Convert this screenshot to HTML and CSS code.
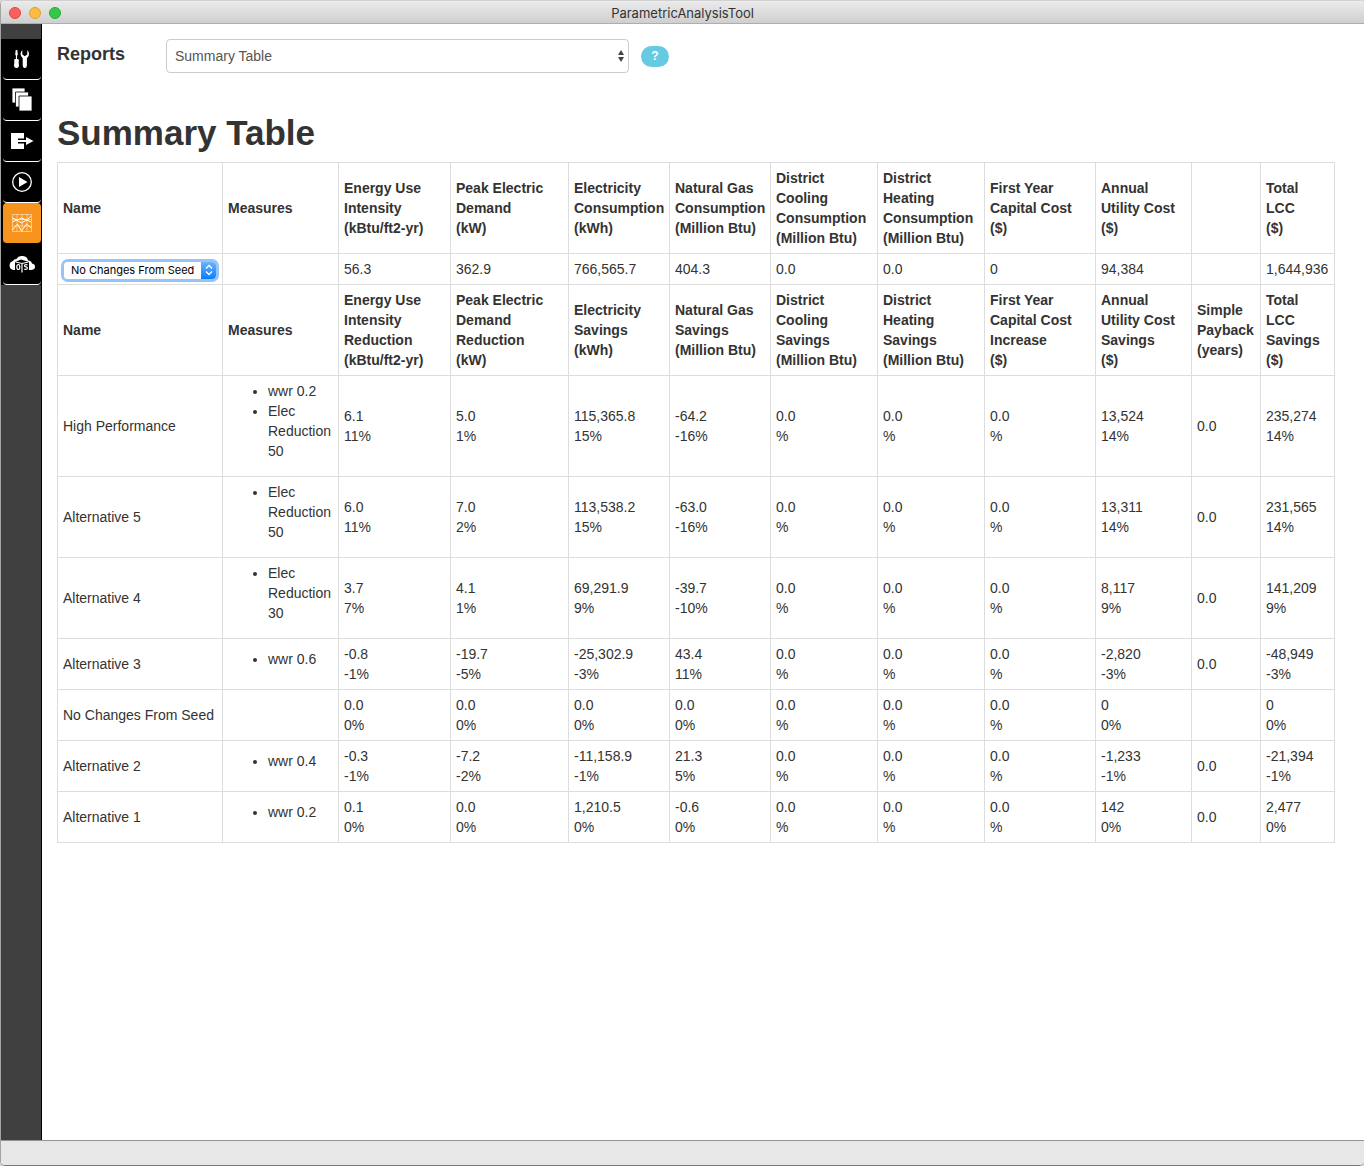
FILE: index.html
```html
<!DOCTYPE html>
<html lang="en">
<head>
<meta charset="utf-8">
<title>ParametricAnalysisTool</title>
<link rel="stylesheet" href="styles.css">
</head>
<body>
<div class="window">
  <header class="titlebar">
    <div class="lights">
      <button class="light light-close" type="button" aria-label="Close"></button>
      <button class="light light-min" type="button" aria-label="Minimize"></button>
      <button class="light light-zoom" type="button" aria-label="Zoom"></button>
    </div>
    <span class="window-title">ParametricAnalysisTool</span>
  </header>
  <div class="workspace">
    <nav class="sidebar" aria-label="Sections">
      <div class="nav-list">
      <button class="nav-item" type="button" aria-label="Measures">
        <svg width="28" height="28" viewBox="0 0 28 28" fill="#fff"><path d="M7.700 5h1.600l.5 4.500-.7 1.200v3.300h1q1.200.8.700 2.200-.4 1.400.1 3 .6 3.800-2.400 3.800t-2.400-3.800q.5-1.600.1-3-.5-1.400.7-2.200h1v-3.300l-.7-1.200z"/><path d="M14.300 5q-3.800 4.300.4 8.200v7.300q.2 2.500 2.100 2.500t2.100-2.500v-7.300q4.200-3.900.4-8.200v4.500l-2.500 1.800-2.500-1.800z"/></svg>
      </button>
      <button class="nav-item" type="button" aria-label="Design alternatives">
        <svg width="28" height="28" viewBox="0 0 28 28" fill="#fff" stroke="#000" stroke-width=".8"><path d="M4 2h13v15h-13z"/><path d="M7.500 6h13v15h-13z"/><path d="M11 10h13v15h-13z"/></svg>
      </button>
      <button class="nav-item" type="button" aria-label="Output">
        <svg width="28" height="28" viewBox="0 0 28 28"><path fill="#fff" d="M3 6h13v16h-13z"/><path d="M10 11.500h9v5h-9z"/><path fill="#fff" d="M10 13h8v-3l7.500 4-7.500 4v-3h-8z"/></svg>
      </button>
      <button class="nav-item" type="button" aria-label="Run">
        <svg width="28" height="28" viewBox="0 0 28 28"><circle cx="14" cy="14" r="9.300" fill="none" stroke="#fff" stroke-width="1.300"/><path fill="#fff" d="M11 9l8.500 5-8.500 5z"/></svg>
      </button>
      <button class="nav-item nav-active" type="button" aria-label="Reports">
        <svg width="28" height="28" viewBox="0 0 28 28" fill="none" stroke="#fff"><path opacity=".6" stroke-width=".8" d="M4.500 5.500h19v17h-19zM4.500 10.500h19M4.500 17h19M9 5.500v17M14 5.500v17M19 5.500v17"/><path d="M4.500 9l5 2 4-2 5 2 5-4M4.500 13l4-2 5 3 5-3 5 2M4.500 21l5-6 4 7 5-7 5 4"/></svg>
      </button>
      <button class="nav-item" type="button" aria-label="OpenStudio Server">
        <svg width="28" height="28" viewBox="0 0 28 28"><path fill="#fff" d="M5.500 20a4.600 4.600 0 0 1-.5-9q.5-2 3.500-2a6 5 0 0 1 11.500 1.500 4 4 0 0 1 4 3q3 .5 3 3.200t-3.500 3.300z"/><path d="M7 12l6-2.500 8 2.500v8.500l-7 3-7-3z"/><g fill="none" stroke="#fff" stroke-width="1.200"><path d="M7.500 12l6.500 1.500 6.500-1.500M14 13.500v9"/><ellipse cx="10.300" cy="17" rx="1.500" ry="2.500"/><path d="M19.500 14.800q-3-.5-3 1 0 .9 1.500 1.100t1.300 1.400q-.3 1.500-3 .9"/></g></svg>
      </button>
      </div>
    </nav>
    <main class="content">
      <div class="report-picker">
        <label class="picker-label" for="report">Reports</label>
        <span class="picker-field">
          <select class="picker-select" id="report"><option>Summary Table</option></select>
          <svg class="picker-arrows" width="6" height="12" viewBox="0 0 6 12" fill="#444"><path d="M3 0l3 5h-6zM3 12l3-5h-6z"/></svg>
        </span>
        <button class="help" type="button" aria-label="Help">?</button>
      </div>
      <h1 class="report-title">Summary Table</h1>
      <table class="summary">
        <colgroup>
          <col class="c-name"><col class="c-measures"><col class="c-eui"><col class="c-peak"><col class="c-energy"><col class="c-energy"><col class="c-district"><col class="c-district"><col class="c-capital"><col class="c-utility"><col class="c-payback"><col class="c-lcc">
        </colgroup>
        <tbody>
          <tr><th>Name</th><th>Measures</th><th>Energy Use<br>Intensity<br>(kBtu/ft2-yr)</th><th>Peak Electric<br>Demand<br>(kW)</th><th>Electricity<br>Consumption<br>(kWh)</th><th>Natural Gas<br>Consumption<br>(Million Btu)</th><th>District<br>Cooling<br>Consumption<br>(Million Btu)</th><th>District<br>Heating<br>Consumption<br>(Million Btu)</th><th>First Year<br>Capital Cost<br>($)</th><th>Annual<br>Utility Cost<br>($)</th><td></td><th>Total<br>LCC<br>($)</th></tr>
          <tr><td><span class="baseline-field"><select class="baseline" aria-label="Baseline alternative"><option>No Changes From Seed</option></select><span class="baseline-cap"><svg width="8" height="12" viewBox="0 0 8 12" fill="none" stroke="#fff" stroke-width="1.300"><path d="M1 4.500l3-3 3 3M1 7.500l3 3 3-3"/></svg></span></span></td><td></td><td>56.3</td><td>362.9</td><td>766,565.7</td><td>404.3</td><td>0.0</td><td>0.0</td><td>0</td><td>94,384</td><td></td><td>1,644,936</td></tr>
          <tr><th>Name</th><th>Measures</th><th>Energy Use<br>Intensity<br>Reduction<br>(kBtu/ft2-yr)</th><th>Peak Electric<br>Demand<br>Reduction<br>(kW)</th><th>Electricity<br>Savings<br>(kWh)</th><th>Natural Gas<br>Savings<br>(Million Btu)</th><th>District<br>Cooling<br>Savings<br>(Million Btu)</th><th>District<br>Heating<br>Savings<br>(Million Btu)</th><th>First Year<br>Capital Cost<br>Increase<br>($)</th><th>Annual<br>Utility Cost<br>Savings<br>($)</th><th>Simple<br>Payback<br>(years)</th><th>Total<br>LCC<br>Savings<br>($)</th></tr>
          <tr><td>High Performance</td><td><ul class="measures"><li>wwr 0.2</li><li>Elec Reduction 50</li></ul></td><td>6.1<br>11%</td><td>5.0<br>1%</td><td>115,365.8<br>15%</td><td>-64.2<br>-16%</td><td>0.0<br>%</td><td>0.0<br>%</td><td>0.0<br>%</td><td>13,524<br>14%</td><td>0.0</td><td>235,274<br>14%</td></tr>
          <tr><td>Alternative 5</td><td><ul class="measures"><li>Elec Reduction 50</li></ul></td><td>6.0<br>11%</td><td>7.0<br>2%</td><td>113,538.2<br>15%</td><td>-63.0<br>-16%</td><td>0.0<br>%</td><td>0.0<br>%</td><td>0.0<br>%</td><td>13,311<br>14%</td><td>0.0</td><td>231,565<br>14%</td></tr>
          <tr><td>Alternative 4</td><td><ul class="measures"><li>Elec Reduction 30</li></ul></td><td>3.7<br>7%</td><td>4.1<br>1%</td><td>69,291.9<br>9%</td><td>-39.7<br>-10%</td><td>0.0<br>%</td><td>0.0<br>%</td><td>0.0<br>%</td><td>8,117<br>9%</td><td>0.0</td><td>141,209<br>9%</td></tr>
          <tr><td>Alternative 3</td><td><ul class="measures"><li>wwr 0.6</li></ul></td><td>-0.8<br>-1%</td><td>-19.7<br>-5%</td><td>-25,302.9<br>-3%</td><td>43.4<br>11%</td><td>0.0<br>%</td><td>0.0<br>%</td><td>0.0<br>%</td><td>-2,820<br>-3%</td><td>0.0</td><td>-48,949<br>-3%</td></tr>
          <tr><td>No Changes From Seed</td><td></td><td>0.0<br>0%</td><td>0.0<br>0%</td><td>0.0<br>0%</td><td>0.0<br>0%</td><td>0.0<br>%</td><td>0.0<br>%</td><td>0.0<br>%</td><td>0<br>0%</td><td></td><td>0<br>0%</td></tr>
          <tr><td>Alternative 2</td><td><ul class="measures"><li>wwr 0.4</li></ul></td><td>-0.3<br>-1%</td><td>-7.2<br>-2%</td><td>-11,158.9<br>-1%</td><td>21.3<br>5%</td><td>0.0<br>%</td><td>0.0<br>%</td><td>0.0<br>%</td><td>-1,233<br>-1%</td><td>0.0</td><td>-21,394<br>-1%</td></tr>
          <tr><td>Alternative 1</td><td><ul class="measures"><li>wwr 0.2</li></ul></td><td>0.1<br>0%</td><td>0.0<br>0%</td><td>1,210.5<br>0%</td><td>-0.6<br>0%</td><td>0.0<br>%</td><td>0.0<br>%</td><td>0.0<br>%</td><td>142<br>0%</td><td>0.0</td><td>2,477<br>0%</td></tr>
        </tbody>
      </table>
    </main>
  </div>
  <footer class="statusbar"></footer>
</div>
</body>
</html>
```
FILE: styles.css
```css
* { box-sizing: border-box; }

body {
  margin: 0;
  background: #d8d8d8;
  color: #333;
  font: 14px/20px "Liberation Sans", Arial, sans-serif;
}

button { padding: 0; border: 0; font-family: inherit; }

.window {
  display: flex;
  flex-direction: column;
  min-height: 100vh;
  border-left: 1px solid #a3a3a3;
  border-bottom: 1px solid #777;
  border-radius: 5px;
  background: #fff;
  overflow: hidden;
}

.titlebar {
  display: grid;
  grid-template-columns: 1fr auto 1fr;
  align-items: center;
  height: 24px;
  padding: 2px 8px 0;
  border-top: 1px solid #d0d0d0;
  border-bottom: 1px solid #aeaeae;
  background: linear-gradient(#ebebeb, #cfcfcf);
}

.lights { display: flex; gap: 8px; }
.light { width: 12px; height: 12px; border: 1px solid; border-radius: 50%; }
.light-close { background: #fc605c; border-color: #df4744; }
.light-min { background: #fdbc40; border-color: #de9f34; }
.light-zoom { background: #34c84a; border-color: #27aa35; }

.window-title {
  color: #333;
  font: 13px/16px Inter, "Liberation Sans", sans-serif;
}

.workspace { display: flex; flex: 1; }

.sidebar {
  flex: none;
  width: 41px;
  padding-top: 15px;
  border-right: 1px solid #000;
  background: #404040;
}

.nav-list { padding-left: 2px; background: #000; }

.nav-item {
  display: flex;
  align-items: center;
  justify-content: center;
  width: 100%;
  height: 41px;
  border-bottom: 1px solid #fff;
  border-radius: 4px;
  background: #000;
}

.nav-active { border-bottom-color: #000; background: #f7941e; }

.content { flex: 1; min-width: 0; padding: 15px 29px 15px 15px; }

.report-picker { display: flex; align-items: center; height: 34px; }

.picker-label {
  width: 109px;
  padding-bottom: 4px;
  font-size: 18px;
  font-weight: bold;
}

.picker-field { position: relative; width: 463px; }

.picker-select {
  display: block;
  appearance: none;
  width: 100%;
  height: 34px;
  padding: 0 20px 0 8px;
  border: 1px solid #ccc;
  border-radius: 4px;
  background: #fff;
  color: #555;
  font: inherit;
}

.picker-arrows { position: absolute; top: 11px; right: 5px; }

.help {
  width: 28px;
  height: 21px;
  margin-left: 12px;
  border-radius: 11px;
  background: #67cae3;
  color: #fff;
  font-size: 12px;
  font-weight: bold;
}

.report-title {
  margin: 40px 0 9px;
  font-size: 35px;
  line-height: 40px;
}

.summary {
  width: 100%;
  border-collapse: collapse;
  table-layout: fixed;
}

.summary th, .summary td {
  padding: 5px;
  border: 1px solid #ddd;
  text-align: left;
  vertical-align: middle;
}

.c-name { width: 165px; }
.c-measures { width: 116px; }
.c-eui { width: 112px; }
.c-peak { width: 118px; }
.c-energy { width: 101px; }
.c-district { width: 107px; }
.c-capital { width: 111px; }
.c-utility { width: 96px; }
.c-payback { width: 69px; }
.c-lcc { width: 74px; }

.measures { margin: 0 0 10px; padding-left: 40px; }

.baseline-field {
  display: flex;
  height: 17px;
  margin: 2px 1px 0;
  border-radius: 4px;
  background: #fff;
  box-shadow: 0 0 0 3px #94c4f8;
}

.baseline {
  appearance: none;
  flex: 1;
  min-width: 0;
  padding: 0 0 0 7px;
  border: 0;
  border-radius: 4px 0 0 4px;
  outline: 0;
  background: #fff;
  color: #000;
  font: 11px/17px Inter, "Liberation Sans", sans-serif;
}

.baseline-cap {
  display: flex;
  align-items: center;
  justify-content: center;
  width: 15px;
  border-radius: 0 4px 4px 0;
  background: linear-gradient(#6cb3fa, #087eff);
  pointer-events: none;
}

.statusbar { height: 25px; border-top: 1px solid #949494; background: #e7e7e7; }
```
